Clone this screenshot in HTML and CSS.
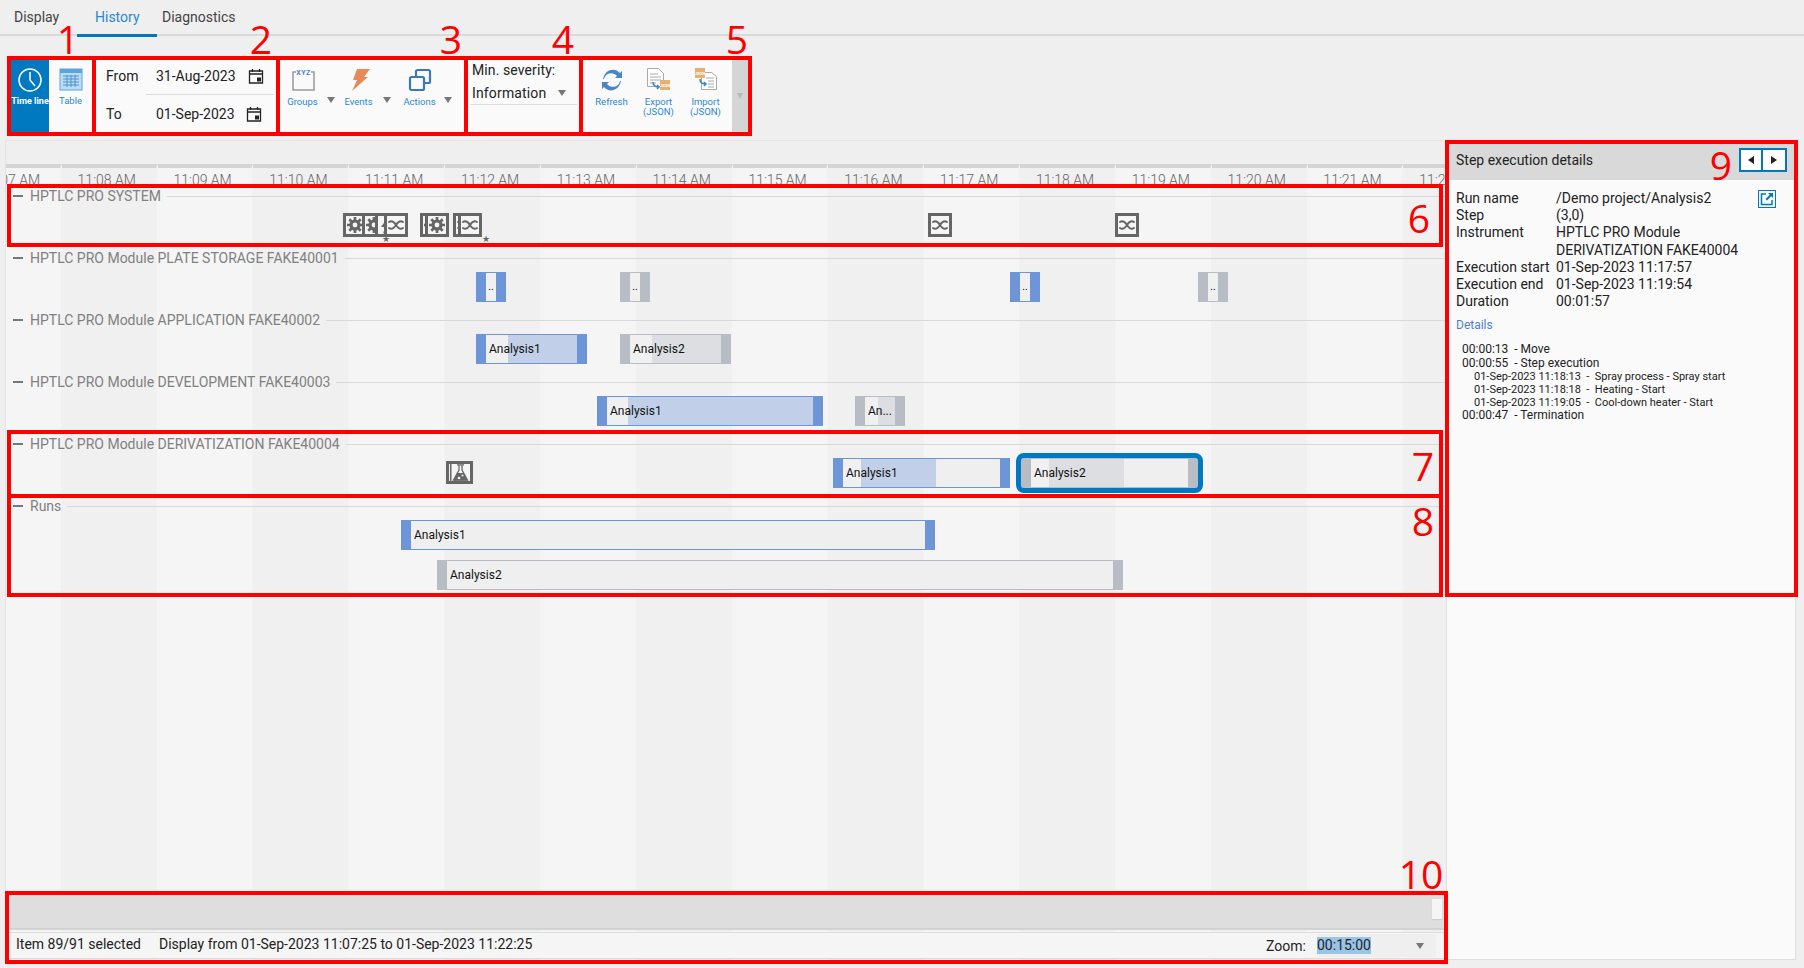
FILE: index.html
```html
<!DOCTYPE html>
<html lang="en">
<head>
    <meta charset="UTF-8">
    <title>History</title>
    <link rel="stylesheet" href="styles.css">
</head>
<body>
    <svg class="defs" width="0" height="0">
        <symbol id="gear" viewBox="0 0 18 18">
            <path d="M9 1v16M1 9h16M3.300 3.300l11.400 11.400M14.700 3.300 3.300 14.700" stroke="#666" stroke-width="2.700"/>
            <circle cx="9" cy="9" r="5.600" fill="#666"/>
            <circle cx="9" cy="9" r="2.400" fill="#f5f5f5"/>
        </symbol>
        <symbol id="wave" viewBox="0 0 18 18">
            <path d="M2 6c3-2 5 0 7 3s4 5 7 3M2 12c3 2 5 0 7-3s4-5 7-3" fill="none" stroke="#666" stroke-width="2" stroke-linecap="round"/>
        </symbol>
        <symbol id="bolt" viewBox="0 0 18 18">
            <path d="M11 0 3 11h4l-2 7 9-11h-4z" fill="#666"/>
        </symbol>
        <symbol id="flask" viewBox="0 0 21 17">
            <path d="M1 0h1.500v17H1z" fill="#666"/>
            <path d="M8 .8h7M10 1v5L4.500 16h14L13 6V1" fill="none" stroke="#666" stroke-width="1.300"/>
            <path d="M8.400 9h6.300l4 7.500H4.400z" fill="#666"/>
            <circle cx="10" cy="14" r="1.300" fill="#f5f5f5"/>
            <circle cx="13.500" cy="11.500" r="1" fill="#f5f5f5"/>
        </symbol>
        <symbol id="calendar" viewBox="0 0 16 16">
            <path d="M1.500 3h13v12h-13zM1.500 6h13M4.500 1v3M11.500 1v3" fill="none" stroke="#222" stroke-width="1.300"/>
            <rect x="9" y="9.500" width="4" height="4" fill="#222"/>
        </symbol>
    </svg>

    <nav class="tabs">
        <a class="tab">Display</a>
        <a class="tab tab-active">History</a>
        <a class="tab">Diagnostics</a>
    </nav>

    <div class="toolbar">
        <div class="group group-view">
            <div class="tool tool-on">
                <svg width="26" height="26" viewBox="0 0 26 26"><circle cx="13" cy="13" r="11" fill="none" stroke="#fff" stroke-width="1.500"/><path d="M13 5v8l5 6" fill="none" stroke="#fff" stroke-width="1.500"/></svg>
                <span>Time line</span>
            </div>
            <div class="tool">
                <svg width="24" height="24" viewBox="0 0 24 24"><rect x="1" y="1" width="22" height="21" fill="#bcdcf3" stroke="#5aa5dc"/><rect x="1" y="1" width="22" height="4" fill="#5aa5dc"/><path d="M4 8h16M4 11h16M4 14h16M4 17h16M8 7v12M12 7v12M16 7v12" stroke="#4a95d0"/></svg>
                <span>Table</span>
            </div>
        </div>

        <div class="group group-range">
            <div class="range-row">
                <label>From</label>
                <span class="range-value">31-Aug-2023</span>
                <svg class="cal" width="16" height="16"><use href="#calendar"/></svg>
            </div>
            <div class="range-row range-last">
                <label>To</label>
                <span class="range-value">01-Sep-2023</span>
                <svg class="cal cal-to" width="16" height="16"><use href="#calendar"/></svg>
            </div>
        </div>

        <div class="group group-menus">
            <div class="tool menu-tool">
                <svg width="26" height="24" viewBox="0 0 26 24"><path d="M6 4H3v18h21V4h-3" fill="#fafafa" stroke="#999" stroke-width="1.500"/><text x="13.500" y="6.500" class="xyz">XYZ</text></svg>
                <span>Groups</span>
                <i class="caret"></i>
            </div>
            <div class="tool menu-tool">
                <svg width="24" height="24" viewBox="0 0 24 24"><path d="M10 1h13l-6 8h4L5 23l5-11H6z" fill="#e8895a"/></svg>
                <span>Events</span>
                <i class="caret"></i>
            </div>
            <div class="tool menu-tool menu-actions">
                <svg width="24" height="24" viewBox="0 0 24 24"><rect x="8" y="2" width="14" height="13" rx="1.500" fill="none" stroke="#3a78b8" stroke-width="2.200"/><rect x="2" y="9" width="14" height="13" rx="1.500" fill="#fafafa" stroke="#3a78b8" stroke-width="2.200"/></svg>
                <span>Actions</span>
                <i class="caret"></i>
            </div>
        </div>

        <div class="group group-severity">
            <div class="severity-label">Min. severity:</div>
            <div class="severity-select">Information<i class="caret"></i></div>
        </div>

        <div class="group group-data">
            <div class="tool">
                <svg width="24" height="24" viewBox="0 0 24 24"><path d="M4 11c1-6 9-8 13-3l-2 2h7V3l-2 2C15-1 5 1 3 11zM20 13c-1 6-9 8-13 3l2-2H2v7l2-2c5 6 15 4 17-6z" fill="#4a86c6"/></svg>
                <span>Refresh</span>
            </div>
            <div class="tool">
                <svg width="26" height="24" viewBox="0 0 26 24"><path d="M1.500.5h11l5 5v13h-16z" fill="#fff" stroke="#aaa"/><path d="M4 6h8M4 9h11M4 12h11M4 15h6" stroke="#aaa"/><rect x="14" y="12" width="10" height="10" fill="#e8b070"/><text x="19" y="18.500" class="json">JSON</text><path d="M7 14c0 4 2 5 6 5m-2-2 2 2-2 2" fill="none" stroke="#3a88c8" stroke-width="1.500"/></svg>
                <span>Export<br>(JSON)</span>
            </div>
            <div class="tool">
                <svg width="26" height="24" viewBox="0 0 26 24"><path d="M8.500 4.500h10l5 4v13h-15z" fill="#fff" stroke="#aaa"/><path d="M13 10h8M15 13h6M15 16h6M15 19h6" stroke="#aaa"/><rect x="2" y="0" width="10" height="10" fill="#e8b070"/><text x="7" y="6.500" class="json">JSON</text><path d="M7 11c0 3 1 5 6 5m-2-2 2 2-2 2" fill="none" stroke="#3a88c8" stroke-width="1.500"/></svg>
                <span>Import<br>(JSON)</span>
            </div>
        </div>

        <div class="toolbar-scroll"><i class="caret caret-light"></i></div>
    </div>

    <main class="main">
        <section class="timeline">
            <div class="ruler">
                <div class="tick">11:07 AM</div>
                <div class="tick">11:08 AM</div>
                <div class="tick">11:09 AM</div>
                <div class="tick">11:10 AM</div>
                <div class="tick">11:11 AM</div>
                <div class="tick">11:12 AM</div>
                <div class="tick">11:13 AM</div>
                <div class="tick">11:14 AM</div>
                <div class="tick">11:15 AM</div>
                <div class="tick">11:16 AM</div>
                <div class="tick">11:17 AM</div>
                <div class="tick">11:18 AM</div>
                <div class="tick">11:19 AM</div>
                <div class="tick">11:20 AM</div>
                <div class="tick">11:21 AM</div>
                <div class="tick">11:22 AM</div>
            </div>

            <div class="track">
                <div class="track-head"><i class="dash"></i><span>HPTLC PRO SYSTEM</span><i class="rule"></i></div>
                <div class="track-body">
                    <svg class="event" style="left:337px"><use href="#gear"/></svg>
                    <svg class="event" style="left:356px"><use href="#gear"/></svg>
                    <svg class="event" style="left:369px"><use href="#bolt"/></svg>
                    <svg class="event" style="left:378px"><use href="#wave"/></svg>
                    <span class="star" style="left:376px">★</span>
                    <svg class="event" style="left:414px"><use href="#gear"/></svg>
                    <svg class="event" style="left:419px"><use href="#gear"/></svg>
                    <svg class="event" style="left:447px"><use href="#wave"/></svg>
                    <svg class="event" style="left:452px"><use href="#wave"/></svg>
                    <span class="star" style="left:476px">★</span>
                    <svg class="event" style="left:922px"><use href="#wave"/></svg>
                    <svg class="event" style="left:1109px"><use href="#wave"/></svg>
                </div>
            </div>

            <div class="track">
                <div class="track-head"><i class="dash"></i><span>HPTLC PRO Module PLATE STORAGE FAKE40001</span><i class="rule"></i></div>
                <div class="track-body">
                    <div class="bar bar-done bar-mini" style="left:470px;width:30px;--a:10px;--b:10px"><span>..</span></div>
                    <div class="bar bar-idle bar-mini" style="left:614px;width:30px;--a:10px;--b:10px"><span>..</span></div>
                    <div class="bar bar-done bar-mini" style="left:1004px;width:30px;--a:10px;--b:10px"><span>..</span></div>
                    <div class="bar bar-idle bar-mini" style="left:1192px;width:30px;--a:10px;--b:10px"><span>..</span></div>
                </div>
            </div>

            <div class="track">
                <div class="track-head"><i class="dash"></i><span>HPTLC PRO Module APPLICATION FAKE40002</span><i class="rule"></i></div>
                <div class="track-body">
                    <div class="bar bar-done" style="left:470px;width:111px;--a:22px;--b:91px"><span>Analysis1</span></div>
                    <div class="bar bar-idle" style="left:614px;width:111px;--a:22px;--b:91px"><span>Analysis2</span></div>
                </div>
            </div>

            <div class="track">
                <div class="track-head"><i class="dash"></i><span>HPTLC PRO Module DEVELOPMENT FAKE40003</span><i class="rule"></i></div>
                <div class="track-body">
                    <div class="bar bar-done" style="left:591px;width:226px;--a:21px;--b:206px"><span>Analysis1</span></div>
                    <div class="bar bar-idle" style="left:849px;width:50px;--a:13px;--b:30px"><span>An...</span></div>
                </div>
            </div>

            <div class="track">
                <div class="track-head"><i class="dash"></i><span>HPTLC PRO Module DERIVATIZATION FAKE40004</span><i class="rule"></i></div>
                <div class="track-body">
                    <svg class="event event-flask" style="left:440px"><use href="#flask"/></svg>
                    <div class="bar bar-done" style="left:827px;width:177px;--a:18px;--b:93px"><span>Analysis1</span></div>
                    <div class="bar bar-idle bar-selected" style="left:1015px;width:177px;--a:18px;--b:93px"><span>Analysis2</span></div>
                </div>
            </div>

            <div class="track track-runs">
                <div class="track-head"><i class="dash"></i><span>Runs</span><i class="rule"></i></div>
                <div class="track-body">
                    <div class="bar bar-done" style="left:395px;width:534px;--a:0px;--b:0px"><span>Analysis1</span></div>
                    <div class="bar bar-idle bar-second" style="left:431px;width:686px;--a:0px;--b:0px"><span>Analysis2</span></div>
                </div>
            </div>

            <div class="timeline-foot">
                <div class="scrollstrip"><i class="thumb"></i></div>
                <div class="statusbar">
                    <span>Item 89/91 selected</span>
                    <span class="status-range">Display from 01-Sep-2023 11:07:25 to 01-Sep-2023 11:22:25</span>
                    <span class="zoom-label">Zoom:</span>
                    <div class="zoom-select"><em>00:15:00</em><i class="caret"></i></div>
                </div>
            </div>
        </section>

        <aside class="details">
            <header class="details-head">
                <span>Step execution details</span>
                <div class="pager">
                    <button class="pager-btn"><i class="tri tri-left"></i></button>
                    <button class="pager-btn"><i class="tri tri-right"></i></button>
                </div>
            </header>
            <div class="details-body">
                <a class="open-link">
                    <svg width="14" height="14" viewBox="0 0 14 14"><path d="M6 2H1.500v10.500H12V8" fill="none" stroke="#0079c1" stroke-width="1.500"/><path d="M8 1h5v5l-1.800-1.800L7 8.500 5.500 7l4.300-4.200z" fill="#0079c1"/></svg>
                </a>
                <dl class="facts">
                    <dt>Run name</dt><dd>/Demo project/Analysis2</dd>
                    <dt>Step</dt><dd>(3,0)</dd>
                    <dt>Instrument</dt><dd>HPTLC PRO Module<br>DERIVATIZATION FAKE40004</dd>
                    <dt>Execution start</dt><dd>01-Sep-2023 11:17:57</dd>
                    <dt>Execution end</dt><dd>01-Sep-2023 11:19:54</dd>
                    <dt>Duration</dt><dd>00:01:57</dd>
                </dl>
                <div class="details-title">Details</div>
                <ul class="steps">
                    <li>00:00:13&nbsp; - Move</li>
                    <li>00:00:55&nbsp; - Step execution</li>
                    <li class="sub">01-Sep-2023 11:18:13&nbsp; -&nbsp; Spray process - Spray start</li>
                    <li class="sub">01-Sep-2023 11:18:18&nbsp; -&nbsp; Heating - Start</li>
                    <li class="sub">01-Sep-2023 11:19:05&nbsp; -&nbsp; Cool-down heater - Start</li>
                    <li>00:00:47&nbsp; - Termination</li>
                </ul>
            </div>
        </aside>
    </main>

    <!-- red call-outs drawn over the screen -->
    <div class="mark mark-1"></div>
    <div class="mark mark-2"></div>
    <div class="mark mark-3"></div>
    <div class="mark mark-4"></div>
    <div class="mark mark-5"></div>
    <div class="mark mark-6"></div>
    <div class="mark mark-7"></div>
    <div class="mark mark-8"></div>
    <div class="mark mark-9"></div>
    <div class="mark mark-10"></div>
    <span class="num num-1">1</span>
    <span class="num num-2">2</span>
    <span class="num num-3">3</span>
    <span class="num num-4">4</span>
    <span class="num num-5">5</span>
    <span class="num num-6">6</span>
    <span class="num num-7">7</span>
    <span class="num num-8">8</span>
    <span class="num num-9">9</span>
    <span class="num num-10">10</span>
</body>
</html>
```

FILE: styles.css
```css
body {
    margin: 0;
    width: 1804px;
    height: 968px;
    overflow: hidden;
    position: relative;
    background-color: #efefef;
    font-family: Roboto, "Liberation Sans", sans-serif;
    font-size: 14px;
    color: #222;
}
.defs {
    position: absolute;
}

/* tabs */
.tabs {
    display: flex;
    height: 34px;
    border-bottom: 2px solid #dadada;
}
.tab {
    padding: 9px 18px 0;
    height: 25px;
    color: #444;
}
.tab:first-child {
    width: 45px;
    padding: 9px 18px 0 14px;
}
.tab-active {
    color: #2b88cf;
    border-bottom: 3px solid #0079c1;
    padding: 9px 18px 0;
    width: 44px;
}
.tab:last-child {
    padding-left: 5px;
}

/* toolbar */
.toolbar {
    display: flex;
    height: 72px;
    margin: 24px 0 0 11px;
    width: 737px;
    background-color: #fafafa;
}
.group {
    display: flex;
    flex: none;
}
.group-view {
    width: 83px;
}
.group-range {
    width: 184px;
    flex-direction: column;
}
.group-menus {
    width: 188px;
    padding-left: 4px;
    box-sizing: border-box;
}
.group-severity {
    width: 115px;
    flex-direction: column;
    padding: 1px 4px 0 4px;
    box-sizing: border-box;
}
.group-data {
    width: 151px;
    padding-left: 7px;
    box-sizing: border-box;
}
.tool {
    display: flex;
    flex-direction: column;
    align-items: center;
    width: 47px;
    padding-top: 8px;
    box-sizing: border-box;
    font-size: 9.500px;
    line-height: 10px;
    color: #2b88cf;
    text-align: center;
    position: relative;
}
.tool svg {
    flex: none;
    margin-bottom: 5px;
}
.group-view .tool {
    width: 43px;
}
.group-view .tool svg {
    margin-bottom: 4px;
}
.group-view .tool-on {
    width: 38px;
    padding-top: 7px;
    background-color: #0079c1;
    color: #fff;
    font-size: 9px;
    font-weight: 700;
    white-space: nowrap;
}
.group-view .tool-on svg {
    margin-bottom: 3px;
}
.menu-tool {
    width: 57px;
    margin-right: -1px;
    padding-right: 16px;
}
.menu-actions {
    margin-left: 5px;
}
.menu-tool .caret {
    position: absolute;
    right: 4px;
    top: 37px;
}
.caret {
    display: inline-block;
    width: 0;
    height: 0;
    border-left: 4px solid transparent;
    border-right: 4px solid transparent;
    border-top: 6px solid #777;
}
.caret-light {
    border-top-color: #bbb;
    border-left-width: 3px;
    border-right-width: 3px;
}
.range-row {
    display: flex;
    align-items: center;
    height: 35px;
    padding: 0 0 3px 12px;
    box-sizing: border-box;
    position: relative;
}
.range-row label {
    width: 50px;
}
.range-value {
    flex: none;
    width: 92px;
}
.range-row::after {
    content: "";
    position: absolute;
    left: 52px;
    right: 4px;
    bottom: 0;
    border-bottom: 1px solid #ddd;
}
.range-last {
    height: 37px;
    padding-bottom: 0;
}
.range-last::after {
    display: none;
}
.cal-to {
    margin-left: -2px;
}
.severity-label {
    height: 20px;
    line-height: 18px;
    padding-left: 2px;
    letter-spacing: 0.100px;
}
.severity-select {
    display: flex;
    align-items: center;
    justify-content: space-between;
    height: 23px;
    padding: 0 11px 0 2px;
    border-bottom: 1px solid #ddd;
    letter-spacing: 0.150px;
}
.toolbar-scroll {
    flex: none;
    width: 16px;
    background-color: #d5d5d5;
    display: flex;
    align-items: center;
    justify-content: center;
}
.xyz {
    font-size: 7px;
    font-weight: 700;
    fill: #4a86c6;
    text-anchor: middle;
    letter-spacing: 0.500px;
}
.json {
    font-size: 4px;
    font-weight: 700;
    fill: #fff;
    text-anchor: middle;
}

/* main */
.main {
    display: flex;
    margin: 8px 0 0 6px;
    height: 820px;
}
.timeline {
    flex: none;
    width: 1440px;
    position: relative;
    display: flex;
    flex-direction: column;
    box-sizing: border-box;
    border-top: 1px solid #e6e6e6;
    background-color: #f5f5f5;
    background-image: linear-gradient(90deg, #f0f0f0 50%, #f5f5f5 50%);
    background-size: 191.660px 100%;
    background-position: 55px 0;
    box-shadow: -1px 0 0 #e4e4e4;
}
.ruler {
    display: flex;
    flex: none;
    height: 47px;
    box-sizing: border-box;
    padding: 23px 0 0 0;
    overflow: hidden;
    background-image: linear-gradient(#efefef 23px, transparent 23px);
}
.tick {
    flex: none;
    width: 95.830px;
    box-sizing: border-box;
    border-top: 4px solid #d5d5d5;
    border-right: 2px solid #f2f2f2;
    padding: 4px 4px 0 0;
    text-align: center;
    line-height: 17px;
    font-weight: 300;
    color: #666;
    white-space: nowrap;
}
.tick:first-child {
    margin-left: -40px;
}
.track {
    flex: none;
    height: 62px;
}
.track-runs {
    height: 96px;
}
.track-head {
    display: flex;
    align-items: center;
    height: 16px;
    padding-left: 7px;
    color: #808080;
}
.dash {
    flex: none;
    width: 10px;
    height: 2px;
    margin-right: 7px;
    background-color: #777;
}
.rule {
    flex: 1;
    height: 1px;
    margin-left: 6px;
    background-color: #d9d9d9;
}
.track-body {
    position: relative;
    height: calc(100% - 16px);
}

/* timeline items */
.event {
    position: absolute;
    top: 9px;
    width: 24px;
    height: 24px;
    box-sizing: border-box;
    border: 3px solid #666;
    background-color: #f5f5f5;
}
.event-flask {
    width: 27px;
    height: 23px;
}
.star {
    position: absolute;
    top: 30px;
    font-size: 9px;
    line-height: 10px;
    color: #666;
}
.bar {
    position: absolute;
    top: 6px;
    height: 30px;
    box-sizing: border-box;
    padding: 0 10px;
    border-top: 1px solid;
    border-bottom: 1px solid;
    font-size: 12px;
    line-height: 28px;
    color: #111;
    white-space: nowrap;
}
.bar span {
    display: block;
    height: 100%;
    padding-left: 3px;
    overflow: hidden;
}
.bar-done {
    border-color: #6f95d9;
    background-color: #6f95d9;
}
.bar-done span {
    background-image: linear-gradient(90deg, #f0f0f0 var(--a), #c1cfe8 var(--a), #c1cfe8 var(--b), #efefef var(--b));
}
.bar-idle {
    border-color: #b8bcc4;
    background-color: #b8bcc4;
}
.bar-idle span {
    background-image: linear-gradient(90deg, #f0f0f0 var(--a), #dcdee2 var(--a), #dcdee2 var(--b), #efefef var(--b));
}
.bar-mini {
    font-size: 10px;
    color: #000;
}
.bar-mini span {
    padding-left: 0;
    text-align: center;
}
.bar-selected {
    outline: 5px solid #0079c1;
    border-radius: 3px;
}
.bar-second {
    top: 46px;
}

/* bottom strip */
.timeline-foot {
    margin-top: auto;
    margin-bottom: 1px;
}
.scrollstrip {
    display: flex;
    justify-content: flex-end;
    align-items: center;
    height: 33px;
    padding-right: 4px;
    background-color: #dedede;
    border-bottom: 2px solid #d2d2d2;
    margin-bottom: 2px;
}
.thumb {
    width: 10px;
    height: 20px;
    margin-top: -6px;
    background-color: #f5f5f5;
    box-shadow: 0 1px 1px #ccc;
}
.statusbar {
    display: flex;
    align-items: center;
    height: 27px;
    padding: 0 0 3px 10px;
    background-color: #f5f5f5;
    border-top: 1px solid #ddd;
    border-bottom: 1px solid #ddd;
    box-sizing: border-box;
    color: #222;
}
.status-range {
    margin-left: 18px;
}
.zoom-label {
    margin-left: auto;
    margin-right: 11px;
    margin-top: 3px;
}
.zoom-select {
    display: flex;
    align-items: center;
    justify-content: space-between;
    width: 119px;
    height: 23px;
    margin: 3px 10px 0 0;
    padding-right: 12px;
    box-sizing: border-box;
    background-color: #efefef;
}
.zoom-select em {
    font-style: normal;
    line-height: 17px;
    background-color: #99c4e4;
    color: #223;
}

/* details panel */
.details {
    flex: none;
    width: 350px;
    box-sizing: border-box;
    background-color: #fafafa;
    border: 1px solid #e0e0e0;
    border-top: 0;
    padding-top: 4px;
}
.details-head {
    display: flex;
    align-items: center;
    justify-content: space-between;
    height: 36px;
    box-sizing: border-box;
    padding: 0 8px 4px 7px;
    background-color: #d9d9d9;
    margin-left: 2px;
}
.pager {
    display: flex;
}
.pager-btn {
    width: 24px;
    height: 24px;
    padding: 0;
    background-color: #fff;
    border: 2px solid #0079c1;
    display: flex;
    align-items: center;
    justify-content: center;
}
.pager-btn + .pager-btn {
    border-left: 0;
}
.tri {
    width: 0;
    height: 0;
    border-top: 4px solid transparent;
    border-bottom: 4px solid transparent;
}
.tri-left {
    border-right: 6px solid #222;
}
.tri-right {
    border-left: 6px solid #222;
}
.details-body {
    position: relative;
    padding: 10px 0 0 7px;
}
.open-link {
    position: absolute;
    top: 10px;
    right: 19px;
    width: 14px;
    height: 14px;
    padding: 1px;
    border: 1.500px solid #0079c1;
    line-height: 0;
}
.facts {
    display: grid;
    grid-template-columns: 100px 1fr;
    margin: 0 0 0 2px;
    line-height: 17.200px;
}
.facts dd {
    margin: 0;
}
.details-title {
    margin: 8px 0 0 2px;
    font-size: 12px;
    line-height: 14px;
    color: #4f7fcf;
}
.steps {
    list-style: none;
    margin: 11px 0 0 8px;
    padding: 0;
    font-size: 12px;
    line-height: 13.500px;
}
.steps .sub {
    padding-left: 12px;
    font-size: 11px;
    line-height: 13px;
}

/* call-outs */
.mark {
    position: absolute;
    box-sizing: border-box;
    border: 4px solid #f00;
}
.mark-1 { left: 7px; top: 56px; width: 89px; height: 80px; }
.mark-2 { left: 92px; top: 56px; width: 188px; height: 80px; }
.mark-3 { left: 276px; top: 56px; width: 192px; height: 80px; }
.mark-4 { left: 464px; top: 56px; width: 119px; height: 80px; }
.mark-5 { left: 579px; top: 56px; width: 173px; height: 80px; }
.mark-6 { left: 7px; top: 184px; width: 1436px; height: 63px; }
.mark-7 { left: 7px; top: 430px; width: 1436px; height: 68px; }
.mark-8 { left: 7px; top: 494px; width: 1436px; height: 103px; }
.mark-9 { left: 1445px; top: 140px; width: 353px; height: 457px; }
.mark-10 { left: 5px; top: 891px; width: 1443px; height: 73px; }
.num {
    position: absolute;
    transform: translate(-50%, -50%);
    font-family: "Open Sans", sans-serif;
    font-size: 39px;
    line-height: 40px;
    color: #f00;
}
.num-1 { left: 68px; top: 39px; }
.num-2 { left: 261px; top: 39px; }
.num-3 { left: 451px; top: 39px; }
.num-4 { left: 563px; top: 39px; }
.num-5 { left: 737px; top: 39px; }
.num-6 { left: 1419px; top: 218px; }
.num-7 { left: 1423px; top: 466px; }
.num-8 { left: 1423px; top: 521px; }
.num-9 { left: 1721px; top: 165px; }
.num-10 { left: 1421px; top: 874px; }
```
